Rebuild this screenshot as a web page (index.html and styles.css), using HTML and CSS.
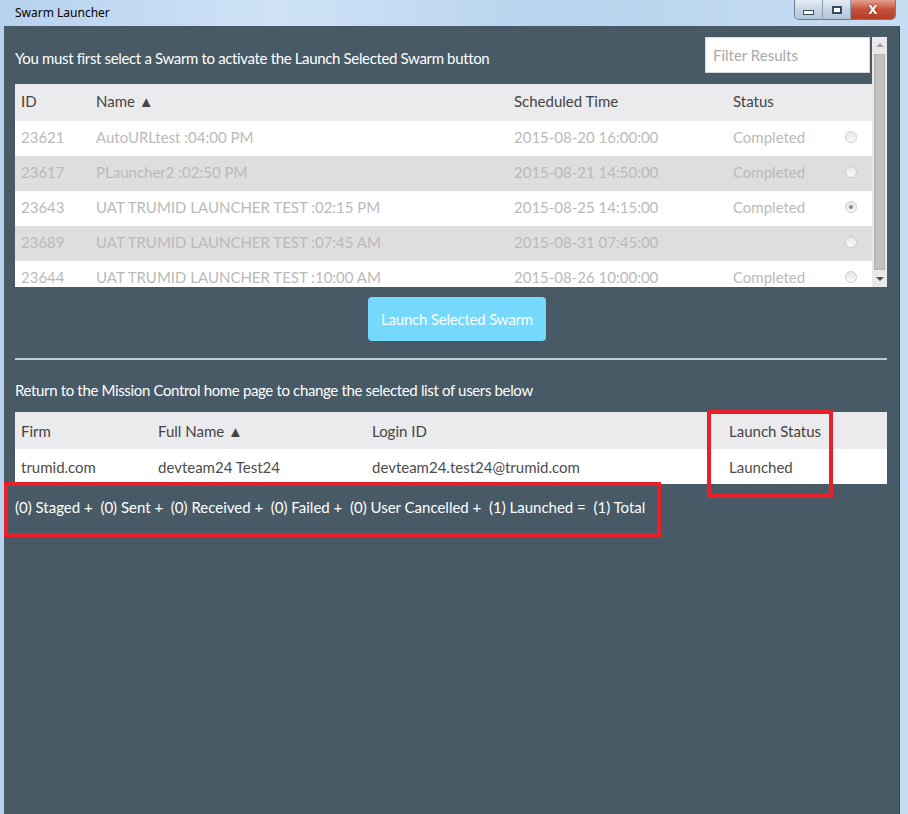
FILE: index.html
```html
<!DOCTYPE html>
<html lang="en">

<head>
    <meta charset="UTF-8">
    <meta name="viewport" content="width=device-width, initial-scale=1.0">
    <title>Swarm Launcher</title>
    <link rel="stylesheet" href="styles.css">
</head>

<body>
    <div class="window">
        <div class="titlebar">
            <span class="title">Swarm Launcher</span>
            <div class="controls">
                <span class="ctl ctl-min"><i></i></span>
                <span class="ctl ctl-max"><i></i></span>
                <span class="ctl ctl-close">X</span>
            </div>
        </div>

        <div class="client">
            <div class="top">
                <div class="top-main">
                    <div class="toolbar">
                        <p class="note">You must first select a Swarm to activate the Launch Selected Swarm button</p>
                        <input class="filter" type="text" placeholder="Filter Results">
                    </div>

                    <div class="swarms">
                        <div class="row head">
                            <span>ID</span>
                            <span>Name &#9650;</span>
                            <span>Scheduled Time</span>
                            <span>Status</span>
                            <span></span>
                        </div>
                        <div class="row">
                            <span>23621</span>
                            <span>AutoURLtest :04:00 PM</span>
                            <span>2015-08-20 16:00:00</span>
                            <span>Completed</span>
                            <span class="radio"></span>
                        </div>
                        <div class="row alt">
                            <span>23617</span>
                            <span>PLauncher2 :02:50 PM</span>
                            <span>2015-08-21 14:50:00</span>
                            <span>Completed</span>
                            <span class="radio"></span>
                        </div>
                        <div class="row">
                            <span>23643</span>
                            <span>UAT TRUMID LAUNCHER TEST :02:15 PM</span>
                            <span>2015-08-25 14:15:00</span>
                            <span>Completed</span>
                            <span class="radio checked"></span>
                        </div>
                        <div class="row alt">
                            <span>23689</span>
                            <span>UAT TRUMID LAUNCHER TEST :07:45 AM</span>
                            <span>2015-08-31 07:45:00</span>
                            <span></span>
                            <span class="radio"></span>
                        </div>
                        <div class="row">
                            <span>23644</span>
                            <span>UAT TRUMID LAUNCHER TEST :10:00 AM</span>
                            <span>2015-08-26 10:00:00</span>
                            <span>Completed</span>
                            <span class="radio"></span>
                        </div>
                    </div>
                </div>
                <div class="scrollbar">
                    <span class="arrow up"></span>
                    <span class="thumb"></span>
                    <span class="arrow down"></span>
                </div>
            </div>

            <div class="actions">
                <button class="launch">Launch Selected Swarm</button>
            </div>

            <hr class="divider">

            <p class="note">Return to the Mission Control home page to change the selected list of users below</p>

            <div class="users">
                <div class="urow head">
                    <span>Firm</span>
                    <span>Full Name &#9650;</span>
                    <span>Login ID</span>
                    <span>Launch Status</span>
                </div>
                <div class="urow">
                    <span>trumid.com</span>
                    <span>devteam24 Test24</span>
                    <span>devteam24.test24@trumid.com</span>
                    <span>Launched</span>
                </div>
            </div>

            <p class="summary">(0) Staged + &nbsp;(0) Sent + &nbsp;(0) Received + &nbsp;(0) Failed + &nbsp;(0) User Cancelled + &nbsp;(1) Launched = &nbsp;(1) Total</p>

            <div class="mark mark-status"></div>
            <div class="mark mark-summary"></div>
        </div>
    </div>
</body>

</html>
```

FILE: styles.css
```css
body {
    margin: 0;
    font-family: Lato, "Open Sans", sans-serif;
    background: #bcd5ef;
}

.window {
    height: 814px;
    display: flex;
    flex-direction: column;
    background: linear-gradient(to right, #b7d2ee, #cfe2f6 30%, #b9d4ef 60%, #c6dcf3);
    overflow: hidden;
}

.titlebar {
    height: 26px;
    display: flex;
    align-items: flex-start;
    justify-content: space-between;
    flex-shrink: 0;
}

.title {
    font-family: "Noto Sans", "DejaVu Sans", sans-serif;
    font-size: 12px;
    color: #000;
    margin: 4px 0 0 15px;
}

.controls {
    display: flex;
    margin-right: 12px;
    border: 1px solid #6d7f94;
    border-top: none;
    border-radius: 0 0 5px 5px;
    overflow: hidden;
    height: 19px;
}

.ctl {
    display: flex;
    align-items: center;
    justify-content: center;
    width: 27px;
    background: linear-gradient(#e4ecf5, #c6d5e6 50%, #b3c6dc);
    border-right: 1px solid #8b9bb0;
}

.ctl-min i {
    width: 9px;
    height: 3px;
    margin-top: 6px;
    background: #fff;
    border: 1px solid #3b4a5c;
}

.ctl-max i {
    width: 8px;
    height: 6px;
    background: #fff;
    border: 1px solid #3b4a5c;
    box-shadow: inset 0 0 0 1px #3b4a5c;
}

.ctl-close {
    width: 44px;
    border-right: none;
    background: linear-gradient(#e3a18f, #c7503c 50%, #b53d27);
    color: #fff;
    font-family: "DejaVu Sans", sans-serif;
    font-weight: bold;
    font-size: 12px;
    text-shadow: 0 0 2px #5a1a10;
}

.client {
    position: relative;
    flex: 1;
    margin: 0 8px 0 4px;
    padding: 11px 12px 0 11px;
    background: #475a66;
    border-right: 1px solid #3a4752;
}

.top {
    display: flex;
    height: 250px;
}

.top-main {
    flex: 1;
    display: flex;
    flex-direction: column;
    min-width: 0;
}

.toolbar {
    display: flex;
    justify-content: space-between;
    align-items: flex-start;
    padding-right: 2px;
    height: 47px;
}

.note {
    margin: 0;
    color: #fff;
    font-size: 15px;
    letter-spacing: -0.35px;
}

.toolbar .note {
    margin-top: 12px;
}

.filter {
    width: 165px;
    height: 36px;
    box-sizing: border-box;
    border: 1px solid #d5d8db;
    padding: 0 7px;
    font-family: inherit;
    font-size: 15px;
    outline: none;
}

.filter::placeholder {
    color: #a9a9a9;
}

.swarms {
    flex: 1;
    overflow: hidden;
    font-size: 15px;
}

.row {
    display: grid;
    grid-template-columns: 75px 418px 219px 112px 1fr;
    align-items: center;
    height: 35px;
    box-sizing: border-box;
    padding: 0 0 3px 6px;
    background: #fff;
    color: #bababa;
}

.row.alt {
    background: #dedede;
}

.row.head,
.urow.head {
    height: 37px;
    background: #ebebed;
    color: #444;
}

.radio {
    width: 10px;
    height: 10px;
    border-radius: 50%;
    border: 1px solid #cfcfcf;
    background: linear-gradient(#e6e6e6, #fafafa);
    position: relative;
}

.radio.checked::after {
    content: "";
    position: absolute;
    top: 3px;
    left: 3px;
    width: 4px;
    height: 4px;
    border-radius: 50%;
    background: #8a8a8a;
}

.scrollbar {
    width: 15px;
    background: #e9e9e9;
    display: flex;
    flex-direction: column;
    align-items: center;
}

.thumb {
    width: 11px;
    flex: 1;
    margin: 2px 0;
    background: #c1c1c1;
    border: 1px solid #b0b0b0;
    box-sizing: border-box;
}

.arrow {
    width: 0;
    height: 0;
    margin: 6px 0 5px;
    border-left: 4px solid transparent;
    border-right: 4px solid transparent;
}

.arrow.up {
    border-bottom: 4px solid #a3a3a3;
}

.arrow.down {
    border-top: 4px solid #555;
    margin: 5px 0 6px;
}

.actions {
    display: flex;
    justify-content: center;
    padding-left: 12px;
    margin-top: 10px;
}

.launch {
    width: 178px;
    height: 44px;
    border: none;
    border-radius: 4px;
    background: #74d9fc;
    color: #fff;
    font-family: inherit;
    font-size: 15px;
    letter-spacing: -0.2px;
}

.divider {
    margin: 17px 0 0;
    border: none;
    border-top: 2px solid #c5cbcf;
}

.divider + .note {
    margin-top: 21px;
}

.users {
    margin-top: 13px;
    font-size: 15px;
}

.urow {
    display: grid;
    grid-template-columns: 137px 214px 357px 1fr;
    align-items: center;
    height: 35px;
    padding-left: 6px;
    background: #fff;
    color: #4d4d4d;
}

.summary {
    margin: 14px 0 0;
    color: #fff;
    font-size: 15px;
}

.mark {
    position: absolute;
    border: 4px solid #e8202a;
}

.mark-status {
    left: 703px;
    top: 384px;
    width: 118px;
    height: 80px;
}

.mark-summary {
    left: 0;
    top: 456px;
    width: 649px;
    height: 47px;
}
```
